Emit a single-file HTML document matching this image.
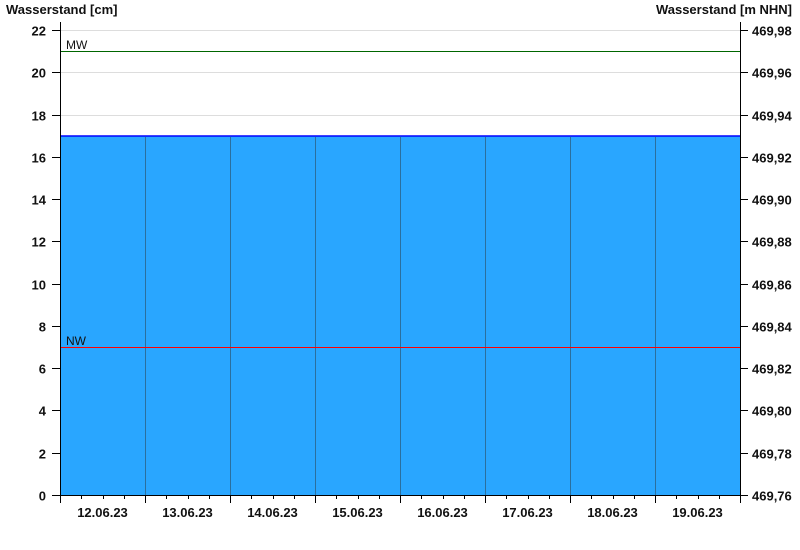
<!DOCTYPE html>
<html><head><meta charset="utf-8"><style>
html,body{margin:0;padding:0;background:#fff;}
svg{display:block;font-family:"Liberation Sans",Arial,sans-serif;}
</style></head><body>
<svg width="800" height="550" viewBox="0 0 800 550" xmlns="http://www.w3.org/2000/svg">
<rect width="800" height="550" fill="#fff"/>
<text x="6" y="14" font-size="13" font-weight="bold" fill="#111">Wasserstand [cm]</text>
<text x="792" y="14" font-size="13" font-weight="bold" fill="#111" text-anchor="end">Wasserstand [m NHN]</text>
<!-- grid in white area -->
<g stroke="#dddddd" stroke-width="1">
<line x1="60" y1="30.5" x2="740" y2="30.5"/>
<line x1="60" y1="72.5" x2="740" y2="72.5"/>
<line x1="60" y1="115.5" x2="740" y2="115.5"/>
</g>
<!-- fill -->
<rect x="60" y="136" width="680" height="359" fill="#29a6ff"/>
<line x1="60" y1="136" x2="740" y2="136" stroke="#0000ff" stroke-width="1.5"/>
<g stroke="#2a6f9e" stroke-width="1">
<line x1="145.5" y1="137" x2="145.5" y2="495"/>
<line x1="230.5" y1="137" x2="230.5" y2="495"/>
<line x1="315.5" y1="137" x2="315.5" y2="495"/>
<line x1="400.5" y1="137" x2="400.5" y2="495"/>
<line x1="485.5" y1="137" x2="485.5" y2="495"/>
<line x1="570.5" y1="137" x2="570.5" y2="495"/>
<line x1="655.5" y1="137" x2="655.5" y2="495"/>
</g>
<!-- MW / NW -->
<line x1="60" y1="51.5" x2="740" y2="51.5" stroke="#006600" stroke-width="1"/>
<text x="66" y="49" font-size="12" fill="#111">MW</text>
<line x1="60" y1="347.5" x2="740" y2="347.5" stroke="#ff0000" stroke-width="1"/>
<text x="66" y="345" font-size="12" fill="#111">NW</text>
<!-- axes -->
<g stroke="#000" stroke-width="1">
<line x1="60.5" y1="22" x2="60.5" y2="496"/>
<line x1="740.5" y1="22" x2="740.5" y2="496"/>
<line x1="60" y1="495.5" x2="741" y2="495.5"/>
</g>
<g id="ticks" stroke="#000" stroke-width="1"></g>
<g id="labels" font-size="13" font-weight="bold" fill="#111"></g>
</svg>
<script>
var ns="http://www.w3.org/2000/svg",t=document.getElementById('ticks'),l=document.getElementById('labels');
function ln(a,b,c,d){var e=document.createElementNS(ns,'line');e.setAttribute('x1',a);e.setAttribute('y1',b);e.setAttribute('x2',c);e.setAttribute('y2',d);t.appendChild(e);}
function tx(x,y,s,anc){var e=document.createElementNS(ns,'text');e.setAttribute('x',x);e.setAttribute('y',y);e.setAttribute('text-anchor',anc);e.textContent=s;l.appendChild(e);}
for(var v=0;v<=22;v+=2){var y=Math.round(495-21.136*v)+0.5;ln(52,y,60,y);ln(740,y,748,y);tx(46,y+5,String(v),'end');
var r=(469.76+v*0.01).toFixed(2).replace('.',',');tx(752,y+5,r,'start');}
for(var i=0;i<=32;i++){var x=Math.round(60+i*21.25)+0.5;ln(x,495,x,i%4==0?503:499);}
var d=['12','13','14','15','16','17','18','19'];
for(var i=0;i<8;i++){tx(102.5+i*85,517,d[i]+'.06.23','middle');}
</script>
</body></html>
